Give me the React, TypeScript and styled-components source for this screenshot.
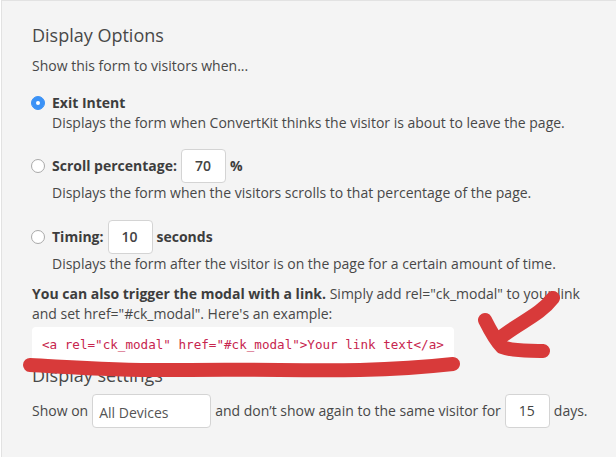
import React from "react";
import styled, { createGlobalStyle } from "styled-components";

const Global = createGlobalStyle`
  html, body { margin: 0; padding: 0; background: #fff; }
  body { width: 616px; height: 457px; overflow: hidden; font-family: "Open Sans", sans-serif; }
`;

const Panel = styled.div`
  position: relative;
  box-sizing: border-box;
  width: 615px;
  height: 457px;
  margin-left: 1px;
  background: #f4f4f4;
  border-top: 1px solid #e2e2e2;
  border-left: 1px solid #e2e2e2;
  padding: 21px 0 0 30px;
  color: #484848;
  font-size: 14px;
  line-height: 20px;
  overflow: hidden;
`;

const Heading = styled.h2<{ $top?: number; $gap: number }>`
  margin: ${(p) => p.$top ?? 0}px 0 ${(p) => p.$gap}px;
  font-size: 18px;
  font-weight: 400;
  line-height: 26px;
  color: #484848;
`;

const Intro = styled.p`
  margin: 0 0 17px;
`;

const Option = styled.div<{ $gap: number }>`
  margin-bottom: ${(p) => p.$gap}px;
`;

const OptionRow = styled.div<{ $compact?: boolean }>`
  display: flex;
  align-items: center;
  height: ${(p) => (p.$compact ? 20 : 34)}px;
  gap: 4px;
  font-weight: 700;
  color: #3d3d3d;
`;

const Radio = styled.span<{ $on?: boolean }>`
  box-sizing: border-box;
  width: 14px;
  height: 14px;
  border-radius: 50%;
  margin: 0 3px 0 -1px;
  flex: none;
  display: flex;
  align-items: center;
  justify-content: center;
  background: ${(p) => (p.$on ? "#3b92f6" : "#fff")};
  border: 1px solid ${(p) => (p.$on ? "#3b92f6" : "#a9a9a9")};
  &::after {
    content: "";
    display: ${(p) => (p.$on ? "block" : "none")};
    width: 4px;
    height: 4px;
    border-radius: 50%;
    background: #fff;
  }
`;

const OptionDesc = styled.p`
  margin: 0 0 0 20px;
`;

const NumberBox = styled.span<{ $weight?: number }>`
  box-sizing: border-box;
  width: 45px;
  height: 34px;
  flex: none;
  display: flex;
  align-items: center;
  padding-left: 13px;
  background: #fff;
  border: 1px solid #d4d4d4;
  border-radius: 4px;
  font-weight: ${(p) => p.$weight ?? 400};
  color: #444;
`;

const Note = styled.p`
  margin: 0;
  strong { font-weight: 700; color: #3d3d3d; }
`;

const Code = styled.code`
  display: block;
  box-sizing: border-box;
  width: 422px;
  height: 36px;
  margin: 3px 0 0;
  padding: 8px 10px;
  background: #fff;
  border-radius: 4px;
  font-family: "DejaVu Sans Mono", monospace;
  font-size: 12.6px;
  line-height: 20px;
  color: #c7254e;
  white-space: nowrap;
`;

const SettingsRow = styled.div`
  display: flex;
  align-items: center;
  gap: 4px;
  height: 34px;
`;

const SelectBox = styled.span`
  box-sizing: border-box;
  width: 119px;
  height: 34px;
  display: flex;
  align-items: center;
  padding: 3px 0 0 6px;
  background: #fff;
  border: 1px solid #d4d4d4;
  border-radius: 4px;
  color: #555;
`;

const Scribble = styled.svg`
  position: absolute;
  left: -2px;
  top: -1px;
  width: 616px;
  height: 457px;
  pointer-events: none;
`;

export default function App() {
  return (
    <>
      <Global />
      <Panel>
        <Heading $gap={8}>Display Options</Heading>
        <Intro>Show this form to visitors when...</Intro>
        <Option $gap={16}>
          <OptionRow $compact>
            <Radio $on />
            Exit Intent
          </OptionRow>
          <OptionDesc>Displays the form when ConvertKit thinks the visitor is about to leave the page.</OptionDesc>
        </Option>
        <Option $gap={17}>
          <OptionRow>
            <Radio />
            Scroll percentage:
            <NumberBox $weight={600}>70</NumberBox>
            %
          </OptionRow>
          <OptionDesc>Displays the form when the visitors scrolls to that percentage of the page.</OptionDesc>
        </Option>
        <Option $gap={10}>
          <OptionRow>
            <Radio />
            Timing:
            <NumberBox $weight={600}>10</NumberBox>
            seconds
          </OptionRow>
          <OptionDesc>Displays the form after the visitor is on the page for a certain amount of time.</OptionDesc>
        </Option>
        <Note>
          <strong>You can also trigger the modal with a link.</strong> Simply add rel="ck_modal" to your link
          <br />
          and set href="#ck_modal". Here's an example:
        </Note>
        <Code>&lt;a rel="ck_modal" href="#ck_modal"&gt;Your link text&lt;/a&gt;</Code>
        <Heading $top={-1} $gap={6}>Display settings</Heading>
        <SettingsRow>
          Show on
          <SelectBox>All Devices</SelectBox>
          and don’t show again to the same visitor for
          <NumberBox>15</NumberBox>
          days.
        </SettingsRow>
        <Scribble viewBox="0 0 616 457">
          <path
            d="M30 365 C70 367 120 371 180 370 C260 369 300 371 360 370 C400 369 435 366 453 364"
            fill="none"
            stroke="#d83a3a"
            strokeWidth="14"
            strokeLinecap="round"
          />
          <path
            d="M553 298 C540 315 520 322 500 338 M485 320 C490 330 495 340 502 347 C515 352 530 350 543 351"
            fill="none"
            stroke="#d83a3a"
            strokeWidth="14"
            strokeLinecap="round"
            strokeLinejoin="round"
          />
        </Scribble>
      </Panel>
    </>
  );
}
